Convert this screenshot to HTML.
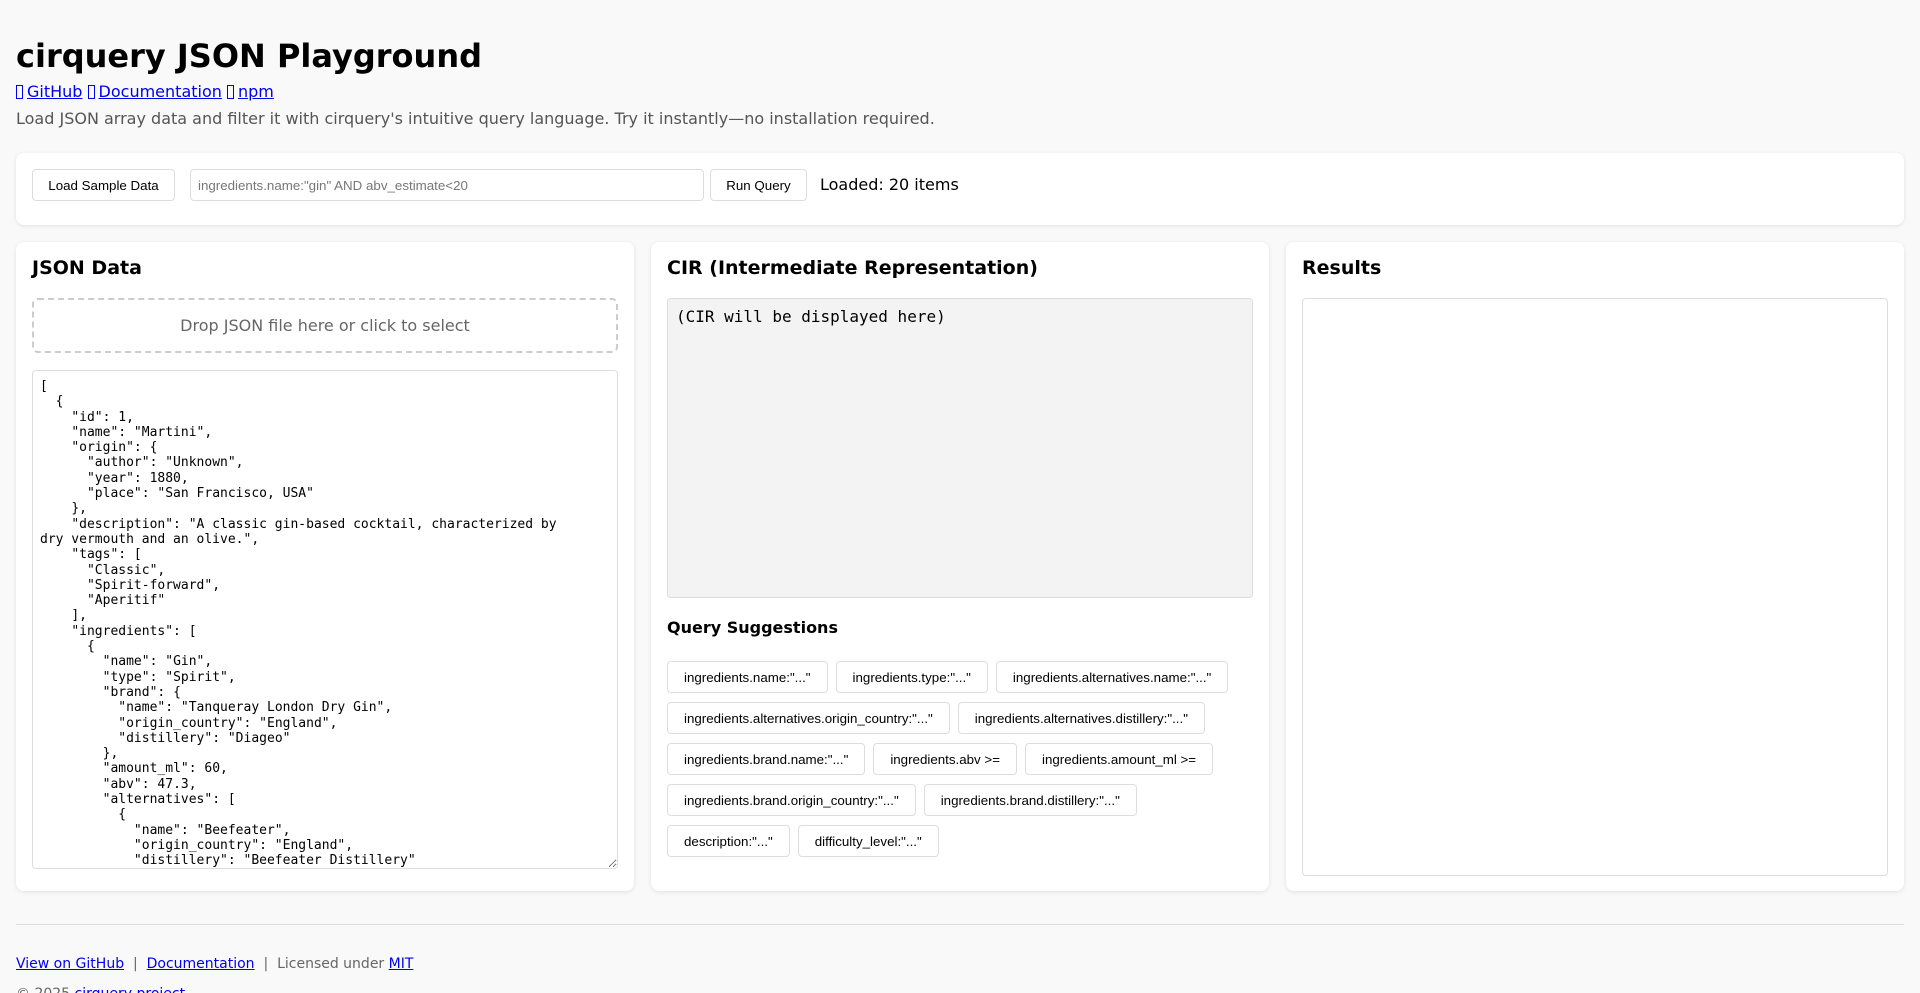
<!DOCTYPE html>
<html><head><meta charset="utf-8"><style>
*{box-sizing:border-box}
html,body{margin:0;padding:0;height:993px;overflow:hidden}
body{background:#f9f9f9;font-family:"DejaVu Sans","Liberation Sans",sans-serif;color:#000;width:1920px;padding:0 16px}
h1{margin:0;padding-top:37px;font-size:32px;line-height:38px;font-weight:bold}
.links{margin-top:7px;line-height:19px;font-size:16px}
.links a{color:#00e;text-decoration:underline}
.box{display:inline-block;width:7px;height:14px;border:1px solid #00e;vertical-align:-2px;margin-right:4px}
.desc{margin-top:8px;line-height:19px;font-size:16px;color:#555}
.card{background:#fff;border-radius:8px;box-shadow:0 1px 4px rgba(0,0,0,.1)}
.controls{margin-top:25px;height:72px;padding:16px 16px 24px;display:flex;align-items:center}
button{font-family:"Liberation Sans",Arial,sans-serif;font-size:13.33px;background:#fff;border:1px solid #ddd;border-radius:4px;height:32px;padding:0 16px;color:#000}
.controls input{margin-left:15px;width:514px;height:32px;border:1px solid #ddd;border-radius:4px;padding:0 7px;font-family:"Liberation Sans",Arial,sans-serif;font-size:13.33px;color:#777}
.controls .run{margin-left:6px;width:97px;padding:0}
.controls .load{width:143px;padding:0}
.loaded{margin-left:13px;font-size:16px;position:relative;top:-1px}
.grid{margin-top:17px;display:flex;gap:17px}
.panel{height:649px;width:618px;padding:16px}
h3{margin:0;font-size:19px;line-height:20px;font-weight:bold}
.drop{margin-top:20px;height:55px;border:2px dashed #ccc;border-radius:6px;display:flex;align-items:center;justify-content:center;color:#666;font-size:16px}
textarea{display:block;margin-top:17px;width:586px;height:499px;border:1px solid #ddd;border-radius:4px;padding:8px 40px 7px 7px;font-family:"DejaVu Sans Mono",monospace;font-size:13px;line-height:15.3px;resize:vertical;background:#fff;color:#000;overflow-y:scroll}
pre{margin:20px 0 0;height:300px;background:#f3f3f3;border:1px solid #ddd;border-radius:4px;padding:8px;font-family:"DejaVu Sans Mono",monospace;font-size:16px;line-height:20px}
h4{margin:21px 0 0;font-size:16px;line-height:18px}
.sugg{margin-top:24px;display:flex;flex-wrap:wrap;gap:9px 8px}
.res{margin-top:20px;height:578px;border:1px solid #ddd;border-radius:4px;background:#fff}
hr{margin:33px 0 0;border:0;border-top:1px solid #ddd}
.foot{margin-top:31px;font-size:14px;color:#666;line-height:17px}
.foot a{color:#00e}
</style></head><body>
<h1>cirquery JSON Playground</h1>
<div class="links"><a href="#"><span class="box"></span>GitHub</a> <a href="#"><span class="box"></span>Documentation</a> <a href="#"><span class="box"></span>npm</a></div>
<div class="desc">Load JSON array data and filter it with cirquery's intuitive query language. Try it instantly—no installation required.</div>
<div class="card controls"><button class="load">Load Sample Data</button><input value='ingredients.name:"gin" AND abv_estimate&lt;20'><button class="run">Run Query</button><span class="loaded">Loaded: 20 items</span></div>
<div class="grid">
<div class="card panel"><h3>JSON Data</h3><div class="drop">Drop JSON file here or click to select</div>
<textarea>[
  {
    "id": 1,
    "name": "Martini",
    "origin": {
      "author": "Unknown",
      "year": 1880,
      "place": "San Francisco, USA"
    },
    "description": "A classic gin-based cocktail, characterized by dry vermouth and an olive.",
    "tags": [
      "Classic",
      "Spirit-forward",
      "Aperitif"
    ],
    "ingredients": [
      {
        "name": "Gin",
        "type": "Spirit",
        "brand": {
          "name": "Tanqueray London Dry Gin",
          "origin_country": "England",
          "distillery": "Diageo"
        },
        "amount_ml": 60,
        "abv": 47.3,
        "alternatives": [
          {
            "name": "Beefeater",
            "origin_country": "England",
            "distillery": "Beefeater Distillery"
          },
          {
            "name": "Bombay Sapphire"
          }
        ]
      }
    ]
  }
]</textarea></div>
<div class="card panel"><h3>CIR (Intermediate Representation)</h3><pre>(CIR will be displayed here)</pre>
<h4>Query Suggestions</h4>
<div class="sugg">
<button>ingredients.name:"..."</button><button>ingredients.type:"..."</button><button>ingredients.alternatives.name:"..."</button>
<button>ingredients.alternatives.origin_country:"..."</button><button>ingredients.alternatives.distillery:"..."</button>
<button>ingredients.brand.name:"..."</button><button>ingredients.abv &gt;=</button><button>ingredients.amount_ml &gt;=</button>
<button>ingredients.brand.origin_country:"..."</button><button>ingredients.brand.distillery:"..."</button>
<button>description:"..."</button><button>difficulty_level:"..."</button>
</div></div>
<div class="card panel"><h3>Results</h3><div class="res"></div></div>
</div>
<hr>
<div class="foot"><a href="#">View on GitHub</a> &nbsp;|&nbsp; <a href="#">Documentation</a> &nbsp;|&nbsp; Licensed under <a href="#">MIT</a></div>
<div class="foot" style="margin-top:13px">© 2025 <a href="#">cirquery project</a></div>
</body></html>
